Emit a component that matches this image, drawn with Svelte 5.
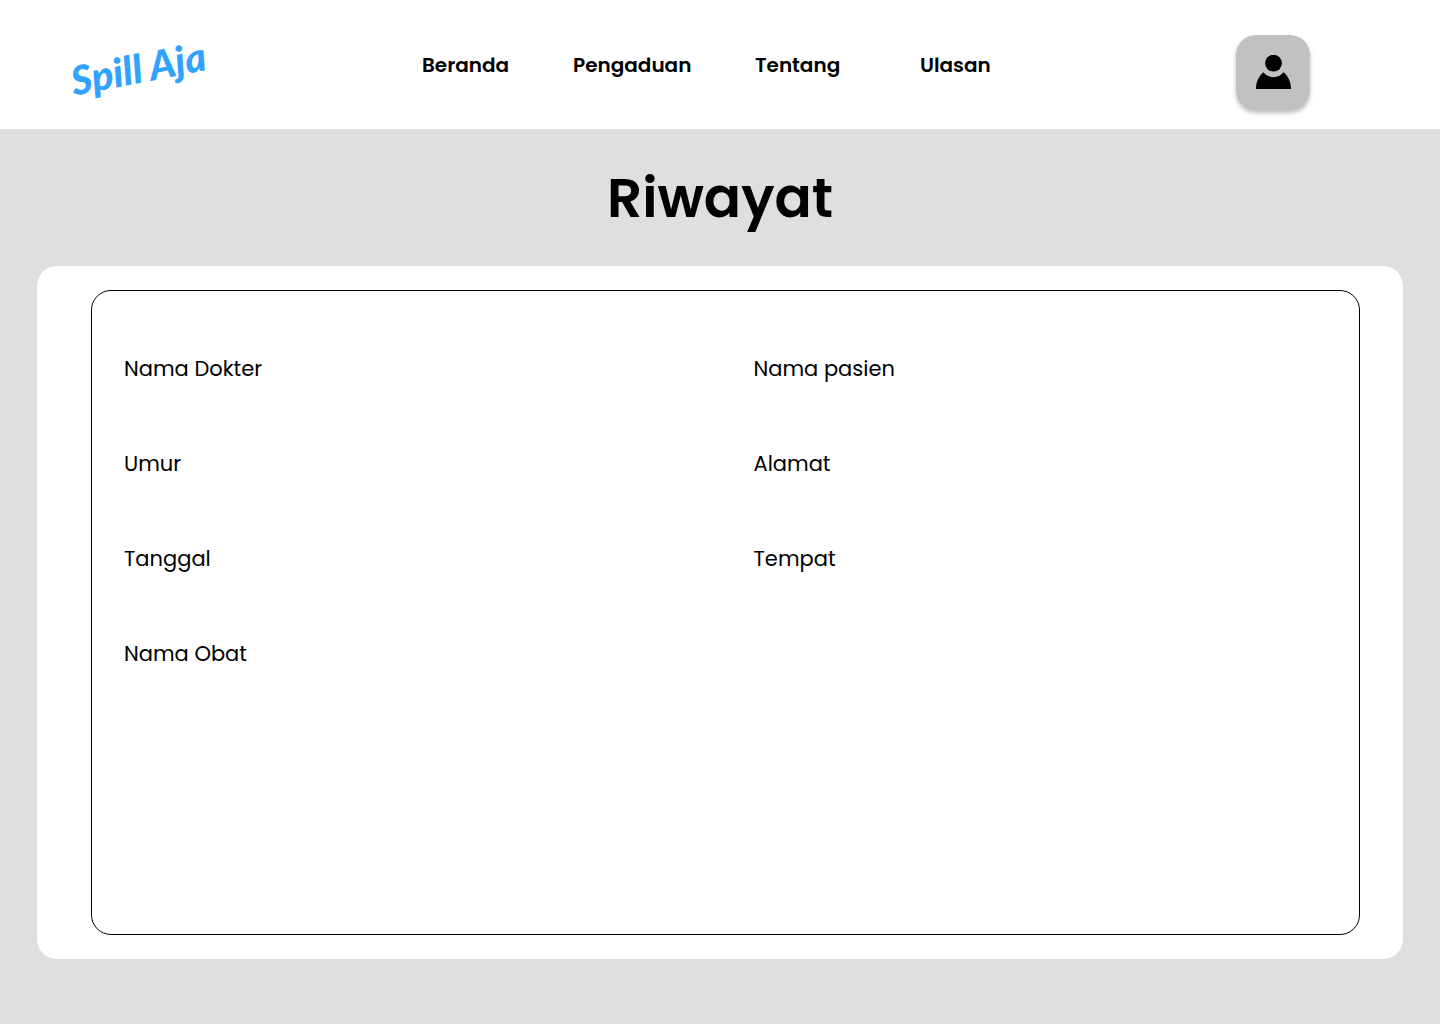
<script>
  const links = ['Beranda', 'Pengaduan', 'Tentang', 'Ulasan'];
  const fields = [
    'Nama Dokter',
    'Nama pasien',
    'Umur',
    'Alamat',
    'Tanggal',
    'Tempat',
    'Nama Obat'
  ];
</script>

<div class="page">
  <header>
    <a class="logo" href="#beranda"><span>Spill Aja</span></a>
    <nav>
      {#each links as link}
        <a href={'#' + link.toLowerCase()}>{link}</a>
      {/each}
    </nav>
    <button class="profile" type="button" aria-label="Profil">
      <svg width="36" height="36" viewBox="0 0 36 36" aria-hidden="true">
        <circle cx="18.500" cy="8.200" r="8.400" />
        <path d="M1 34C1 27 3.700 21.200 8.500 17.300c2.400 3.200 6 4.900 10 4.900s7.600-1.700 10-4.900C33.300 21.200 36 27 36 34Z" />
      </svg>
    </button>
  </header>

  <main>
    <h1>Riwayat</h1>
    <section class="card">
      <dl>
        {#each fields as field}
          <div class="field">
            <dt>{field}</dt>
          </div>
        {/each}
      </dl>
    </section>
  </main>
</div>

<style>
  :global(body) {
    margin: 0;
    background: #dfdfdf;
  }

  .page {
    min-height: 100vh;
    box-sizing: border-box;
    display: flex;
    flex-direction: column;
    color: #000;
    font-family: Poppins, Inter, sans-serif;
  }

  header {
    display: grid;
    grid-template-columns: 22fr auto 20fr;
    align-items: start;
    padding: 35px 130px 19px 70px;
    background: #fff;
  }

  a {
    color: inherit;
    text-decoration: none;
  }

  .logo {
    justify-self: start;
    color: #30a2ff;
    font-family: Lato, sans-serif;
    font-size: 40px;
    font-style: italic;
    font-weight: 900;
    line-height: 66px;
  }

  .logo span {
    display: block;
    transform: rotate(-11deg);
  }

  nav {
    display: grid;
    grid-template-columns: 151px 182px 165px 70px;
    font-size: 20px;
    font-weight: 600;
    line-height: 60px;
    white-space: nowrap;
  }

  .profile {
    justify-self: end;
    display: grid;
    place-items: center;
    width: 74px;
    height: 75px;
    padding: 0;
    border: 0;
    border-radius: 20px;
    background: #c1c1c1;
    box-shadow: 0 3px 4px rgb(0 0 0 / 25%);
  }

  main {
    flex: 1;
    display: flex;
    flex-direction: column;
    padding: 33px 37px 65px;
  }

  h1 {
    margin: 0 0 32px;
    font-size: 55px;
    font-weight: 600;
    line-height: 72px;
    text-align: center;
  }

  .card {
    flex: 1;
    display: flex;
    padding: 24px 43px 24px 54px;
    border-radius: 20px;
    background: #fff;
  }

  dl {
    flex: 1;
    display: grid;
    grid-template-columns: 1fr 1fr;
    grid-auto-rows: 95px;
    column-gap: 24px;
    box-sizing: border-box;
    margin: 0;
    padding: 61px 0 61px 32px;
    border: 1px solid #000;
    border-radius: 20px;
    background: #fff;
  }

  dt {
    font-size: 21px;
    line-height: 33px;
  }
</style>
